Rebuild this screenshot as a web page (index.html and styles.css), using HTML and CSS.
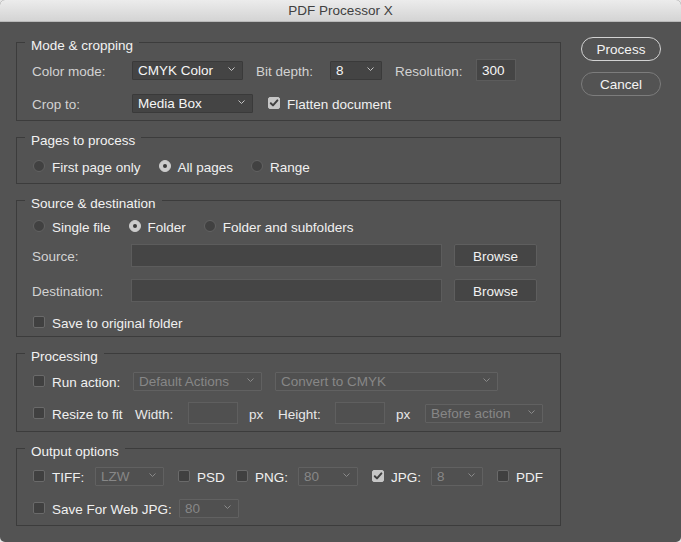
FILE: index.html
```html
<!DOCTYPE html>
<html lang="en">
<head>
<meta charset="utf-8">
<title>PDF Processor X</title>
<link rel="stylesheet" href="styles.css">
</head>
<body>
<div class="window">
  <div class="titlebar">PDF Processor X</div>
  <div class="content">
    <div class="panels">

      <fieldset class="panel panel-mode">
        <legend>Mode &amp; cropping</legend>
        <div class="row">
          <span class="label w-100">Color mode:</span>
          <div class="select w-111"><span>CMYK Color</span><svg class="chev" width="7" height="4" viewBox="0 0 7 4"><polyline points="0.5,0.5 3.5,3.5 6.5,0.5"/></svg></div>
          <span class="label ml-13 w-74">Bit depth:</span>
          <div class="select w-52"><span>8</span><svg class="chev" width="7" height="4" viewBox="0 0 7 4"><polyline points="0.5,0.5 3.5,3.5 6.5,0.5"/></svg></div>
          <span class="label ml-13 w-81">Resolution:</span>
          <div class="input w-40 h-22"><span>300</span></div>
        </div>
        <div class="row gap-11">
          <span class="label w-100">Crop to:</span>
          <div class="select w-121"><span>Media Box</span><svg class="chev" width="7" height="4" viewBox="0 0 7 4"><polyline points="0.5,0.5 3.5,3.5 6.5,0.5"/></svg></div>
          <span class="check checked ml-15"><svg width="12" height="12" viewBox="0 0 12 12"><path d="M2.8 6.2 L5 8.4 L9.4 3.4"/></svg></span>
          <span class="opt">Flatten document</span>
        </div>
      </fieldset>

      <fieldset class="panel panel-pages">
        <legend>Pages to process</legend>
        <div class="row">
          <span class="radio"></span><span class="opt">First page only</span>
          <span class="radio on ml-group"></span><span class="opt">All pages</span>
          <span class="radio ml-group"></span><span class="opt">Range</span>
        </div>
      </fieldset>

      <fieldset class="panel panel-source">
        <legend>Source &amp; destination</legend>
        <div class="row">
          <span class="radio"></span><span class="opt">Single file</span>
          <span class="radio on ml-group"></span><span class="opt">Folder</span>
          <span class="radio ml-group"></span><span class="opt">Folder and subfolders</span>
        </div>
        <div class="row row-23 gap-7">
          <span class="label w-99">Source:</span>
          <div class="input w-311 h-23"></div>
          <button class="browse">Browse</button>
        </div>
        <div class="row row-23 gap-12">
          <span class="label w-99">Destination:</span>
          <div class="input w-311 h-23"></div>
          <button class="browse">Browse</button>
        </div>
        <div class="row gap-9">
          <span class="check"></span><span class="opt">Save to original folder</span>
        </div>
      </fieldset>

      <fieldset class="panel panel-proc">
        <legend>Processing</legend>
        <div class="row">
          <span class="check"></span><span class="opt w-81">Run action:</span>
          <div class="select disabled w-129"><span>Default Actions</span><svg class="chev" width="7" height="4" viewBox="0 0 7 4"><polyline points="0.5,0.5 3.5,3.5 6.5,0.5"/></svg></div>
          <div class="select disabled w-223 ml-13"><span>Convert to CMYK</span><svg class="chev" width="7" height="4" viewBox="0 0 7 4"><polyline points="0.5,0.5 3.5,3.5 6.5,0.5"/></svg></div>
        </div>
        <div class="row gap-10">
          <span class="check"></span><span class="opt w-83">Resize to fit</span>
          <span class="label w-53 bright">Width:</span>
          <div class="input disabled w-50 h-22"></div>
          <span class="label ml-11 w-29 bright">px</span>
          <span class="label w-57 bright">Height:</span>
          <div class="input disabled w-50 h-22"></div>
          <span class="label ml-11 w-29 bright">px</span>
          <div class="select disabled w-118"><span>Before action</span><svg class="chev" width="7" height="4" viewBox="0 0 7 4"><polyline points="0.5,0.5 3.5,3.5 6.5,0.5"/></svg></div>
        </div>
      </fieldset>

      <fieldset class="panel panel-out">
        <legend>Output options</legend>
        <div class="row">
          <span class="check"></span><span class="opt w-43">TIFF:</span>
          <div class="select disabled w-69"><span>LZW</span><svg class="chev" width="7" height="4" viewBox="0 0 7 4"><polyline points="0.5,0.5 3.5,3.5 6.5,0.5"/></svg></div>
          <span class="check ml-14"></span><span class="opt w-38">PSD</span>
          <span class="check"></span><span class="opt w-43">PNG:</span>
          <div class="select disabled w-60"><span>80</span><svg class="chev" width="7" height="4" viewBox="0 0 7 4"><polyline points="0.5,0.5 3.5,3.5 6.5,0.5"/></svg></div>
          <span class="check checked ml-14"><svg width="12" height="12" viewBox="0 0 12 12"><path d="M2.8 6.2 L5 8.4 L9.4 3.4"/></svg></span><span class="opt w-40">JPG:</span>
          <div class="select disabled w-52"><span>8</span><svg class="chev" width="7" height="4" viewBox="0 0 7 4"><polyline points="0.5,0.5 3.5,3.5 6.5,0.5"/></svg></div>
          <span class="check ml-14"></span><span class="opt">PDF</span>
        </div>
        <div class="row gap-10">
          <span class="check"></span><span class="opt w-127">Save For Web JPG:</span>
          <div class="select disabled w-60"><span>80</span><svg class="chev" width="7" height="4" viewBox="0 0 7 4"><polyline points="0.5,0.5 3.5,3.5 6.5,0.5"/></svg></div>
        </div>
      </fieldset>

    </div>
    <div class="actions">
      <button class="btn btn-default">Process</button>
      <button class="btn">Cancel</button>
    </div>
  </div>
</div>
</body>
</html>
```

FILE: styles.css
```css
* { box-sizing: border-box; }

html, body {
  margin: 0;
  padding: 0;
  background: #e6e6e6;
}

body {
  width: 681px;
  height: 542px;
  overflow: hidden;
  font-family: "Liberation Sans", Arial, Helvetica, sans-serif;
  font-size: 13.5px;
  line-height: 15px;
  color: #e6e6e6;
}

.window {
  width: 681px;
  height: 542px;
  background: #535353;
  border-radius: 5px;
  overflow: hidden;
}

.titlebar {
  height: 22px;
  line-height: 22px;
  text-align: center;
  color: #404040;
  background: linear-gradient(#ececec, #d4d4d4);
  border-bottom: 1px solid #b9b9b9;
}

.content {
  display: flex;
  padding: 10px 0 0 16px;
}

.panels {
  width: 545px;
  display: flex;
  flex-direction: column;
}

.panel {
  margin: 0 0 6px 0;
  padding: 6px 15px 6px 15px;
  border: 1px solid #3c3c3c;
  min-width: 0;
}

.panel legend {
  margin-left: -7px;
  padding: 6px 6px 0 6px;
  line-height: 15px;
  color: #f2f2f2;
}

.panel-pages { padding-top: 7px; }
.panel-source { padding-top: 4px; padding-bottom: 3px; }
.panel-proc { padding-bottom: 7px; }

.row {
  display: flex;
  align-items: center;
  height: 22px;
  white-space: nowrap;
}
.row-23 { height: 23px; }

.gap-7 { margin-top: 7px; }
.gap-9 { margin-top: 9px; }
.gap-10 { margin-top: 10px; }
.gap-11 { margin-top: 11px; }
.gap-12 { margin-top: 12px; }

.label {
  color: #d2d2d2;
  flex: none;
  padding-top: 2px;
}
.label.bright { color: #e8e8e8; }

.opt {
  color: #f0f0f0;
  margin-left: 7px;
  flex: none;
  padding-top: 2px;
}

.ml-11 { margin-left: 11px; }
.ml-13 { margin-left: 13px; }
.ml-14 { margin-left: 14px; }
.ml-15 { margin-left: 15px; }

.w-29 { width: 29px; }
.w-38 { width: 38px; }
.w-40 { width: 40px; }
.w-43 { width: 43px; }
.w-50 { width: 50px; }
.w-52 { width: 52px; }
.w-53 { width: 53px; }
.w-57 { width: 57px; }
.w-60 { width: 60px; }
.w-69 { width: 69px; }
.w-74 { width: 74px; }
.w-81 { width: 81px; }
.w-83 { width: 83px; }
.w-99 { width: 99px; }
.w-100 { width: 100px; }
.w-111 { width: 111px; }
.w-118 { width: 118px; }
.w-121 { width: 121px; }
.w-127 { width: 127px; }
.w-129 { width: 129px; }
.w-223 { width: 223px; }
.w-311 { width: 311px; }

.h-22 { height: 22px; }
.h-23 { height: 23px; }

.select {
  flex: none;
  height: 19px;
  display: flex;
  align-items: center;
  justify-content: space-between;
  padding: 0 7px 0 5px;
  background: #444444;
  border: 1px solid #3a3a3a;
  border-radius: 1px;
  color: #f6f6f6;
}
.select span { padding-top: 1px; }
.select .chev {
  fill: none;
  stroke: #c4c4c4;
  stroke-width: 1;
  margin-top: -2px;
}
.select.disabled {
  background: #505050;
  border-color: #616161;
  color: #878787;
}
.select.disabled .chev { stroke: #8a8a8a; }

.input {
  flex: none;
  display: flex;
  align-items: center;
  padding: 0 5px;
  background: #454545;
  border: 1px solid #5c5c5c;
  color: #f6f6f6;
}
.input span { padding-top: 1px; }
.input.disabled {
  background: #505050;
  border-color: #5f5f5f;
}

.browse {
  flex: none;
  margin-left: 12px;
  width: 83px;
  height: 23px;
  padding: 2px 0 0;
  font: inherit;
  color: #f2f2f2;
  background: #454545;
  border: 1px solid #5e5e5e;
  border-radius: 2px;
}

.check {
  flex: none;
  width: 12px;
  height: 12px;
  margin-left: 1px;
  border: 1px solid #6a6a6a;
  border-radius: 2px;
  background: #404040;
  display: flex;
  align-items: center;
  justify-content: center;
}
.check.ml-14 { margin-left: 14px; }
.check.ml-15 { margin-left: 15px; }
.check.checked {
  background: #c6c6c6;
  border-color: #c6c6c6;
}
.check svg {
  fill: none;
  stroke: #404040;
  stroke-width: 2;
  stroke-linecap: round;
  stroke-linejoin: round;
  margin: -1px;
}

.radio {
  flex: none;
  width: 12px;
  height: 12px;
  margin-left: 1px;
  border: 1px solid #626262;
  border-radius: 50%;
  background: #414141;
  display: flex;
  align-items: center;
  justify-content: center;
}
.radio.ml-group { margin-left: 18px; }
.radio.on {
  background: #cdcdcd;
  border-color: #cdcdcd;
}
.radio.on::after {
  content: "";
  width: 4px;
  height: 4px;
  border-radius: 50%;
  background: #3a3a3a;
}

.actions {
  margin-left: 20px;
  padding-top: 5px;
  display: flex;
  flex-direction: column;
  gap: 11px;
}

.btn {
  width: 80px;
  height: 24px;
  padding: 1px 0 0;
  font: inherit;
  color: #f4f4f4;
  background: #535353;
  border: 1px solid #7c7c7c;
  border-radius: 12px;
}
.btn-default {
  border: 1.5px solid #d2d2d2;
}
```
